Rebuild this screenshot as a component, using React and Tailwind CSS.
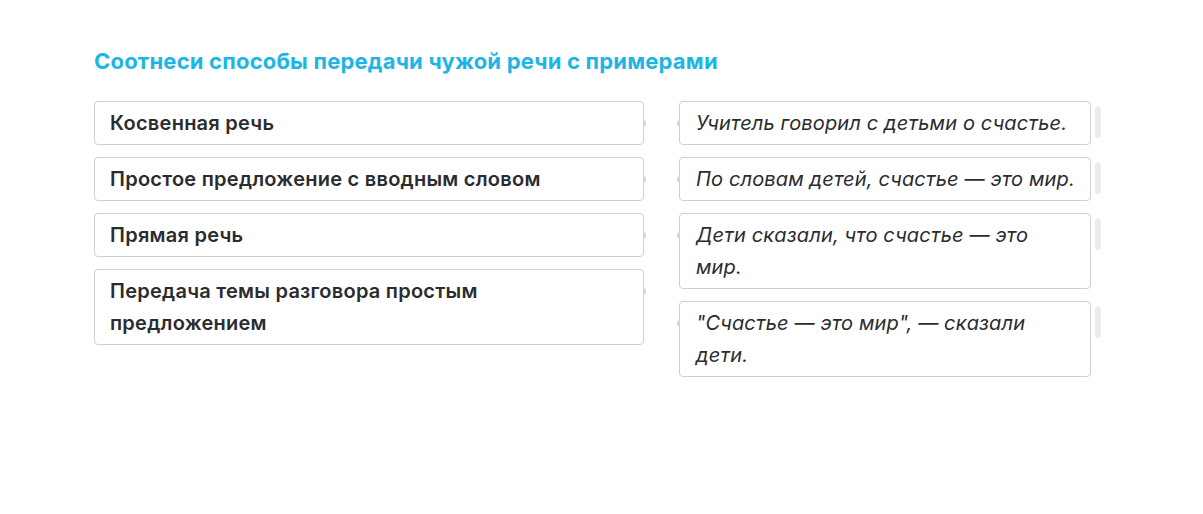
import React from "react";

const left = [
  "Косвенная речь",
  "Простое предложение с вводным словом",
  "Прямая речь",
  "Передача темы разговора простым предложением",
];

const right = [
  "Учитель говорил с детьми о счастье.",
  "По словам детей, счастье — это мир.",
  "Дети сказали, что счастье — это мир.",
  "\"Счастье — это мир\", — сказали дети.",
];

const App = () => {
  return (
    <div className="min-h-[514px] bg-white pl-[94px] pt-[46px] font-['Inter',sans-serif] text-[#2a2c30]">
      <h1 className="text-[22px] font-bold leading-[30px] tracking-[0.2px] text-[#1cb6e6]">
        Соотнеси способы передачи чужой речи с примерами
      </h1>

      <div className="mt-[25px] flex items-start gap-[35px]">
        {/* left column */}
        <div className="flex w-[550px] flex-col gap-3">
          {left.map((text, i) => (
            <div
              key={i}
              className="relative min-h-[44px] rounded-[4px] border border-[#cfcfcf] px-[15px] py-[5px] text-[20px] font-semibold leading-8 tracking-[0.25px]"
            >
              {text}
              <span className="absolute right-[-3px] top-[18px] h-[7px] w-[3px] rounded-r bg-[#d6d6d6]" />
            </div>
          ))}
        </div>

        {/* right column */}
        <div className="flex flex-col gap-3">
          {right.map((text, i) => (
            <div key={i} className="flex items-start gap-1">
              <div className="relative min-h-[44px] w-[412px] rounded-[4px] border border-[#cfcfcf] py-[5px] pl-[16px] pr-[14px] text-[20px] italic leading-8 tracking-[0.15px]">
                {text}
                <span className="absolute left-[-3px] top-[18px] h-[7px] w-[3px] rounded-l bg-[#d6d6d6]" />
              </div>
              <div className="mt-[5px] h-8 w-[6px] rounded-sm bg-[#ececec]" />
            </div>
          ))}
        </div>
      </div>
    </div>
  );
};

export default App;
